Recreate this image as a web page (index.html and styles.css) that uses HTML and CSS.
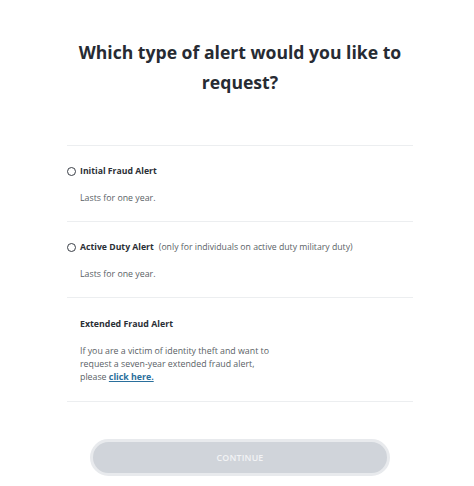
FILE: index.html
```html
<!DOCTYPE html>
<html>
<head>
<meta charset="utf-8">
<link rel="stylesheet" href="styles.css">
</head>
<body>
<div class="page">
  <h1 class="title">Which type of alert would you like to request?</h1>
  <div class="options">
    <div class="option">
      <label class="opt-label"><span class="radio"></span><span class="opt-name">Initial Fraud Alert</span></label>
      <p class="opt-desc">Lasts for one year.</p>
    </div>
    <div class="option">
      <label class="opt-label"><span class="radio"></span><span class="opt-name">Active Duty Alert</span><span class="opt-note">(only for individuals on active duty military duty)</span></label>
      <p class="opt-desc">Lasts for one year.</p>
    </div>
    <div class="option extended">
      <div class="ext-name">Extended Fraud Alert</div>
      <p class="ext-desc">If you are a victim of identity theft and want to<br>request a seven-year extended fraud alert,<br>please <a class="link" href="#">click here.</a></p>
    </div>
  </div>
  <div class="actions">
    <button class="continue" type="button">CONTINUE</button>
  </div>
</div>
</body>
</html>
```
FILE: styles.css
```css
html, body {
  margin: 0;
  padding: 0;
  background: #ffffff;
}
body {
  font-family: "Open Sans", "Liberation Sans", sans-serif;
  color: #2b2f36;
}
.page {
  width: 346px;
  margin-left: 67px;
  padding-top: 37px;
}
.title {
  margin: 0;
  font-size: 17.6px;
  line-height: 30px;
  font-weight: 700;
  text-align: center;
  color: #272b33;
}
.options {
  margin-top: 48px;
  border-top: 1px solid #eceef0;
}
.option {
  border-bottom: 1px solid #eceef0;
  padding: 18px 0 16px 0;
}
.opt-label {
  display: flex;
  align-items: center;
  height: 14px;
  font-size: 8.7px;
}
.radio {
  width: 7px;
  height: 7px;
  border: 1px solid #3a3f47;
  border-radius: 50%;
  margin-right: 4px;
  flex: none;
}
.opt-name {
  font-weight: 700;
  color: #2b2f36;
}
.opt-note {
  margin-left: 5px;
  color: #5a5f66;
}
.opt-desc {
  margin: 13px 0 0 13px;
  font-size: 8.8px;
  line-height: 14px;
  color: #5a5f66;
}
.extended {
  padding: 19px 0 17px 13px;
}
.ext-name {
  font-size: 8.8px;
  font-weight: 700;
  line-height: 14px;
  color: #2b2f36;
}
.ext-desc {
  margin: 14px 0 0 0;
  font-size: 8.8px;
  line-height: 13px;
  color: #5a5f66;
}
.link {
  color: #2a6f9c;
  font-weight: 700;
  text-decoration: underline;
}
.actions {
  display: flex;
  justify-content: center;
  margin-top: 37px;
}
.continue {
  width: 300px;
  height: 37px;
  border: 3px solid #e8eaed;
  border-radius: 19px;
  background: #d0d4da;
  color: #f2f3f5;
  font-family: "Open Sans", "Liberation Sans", sans-serif;
  font-size: 8.8px;
  font-weight: 600;
  letter-spacing: 0.2px;
  padding: 0;
}
```
